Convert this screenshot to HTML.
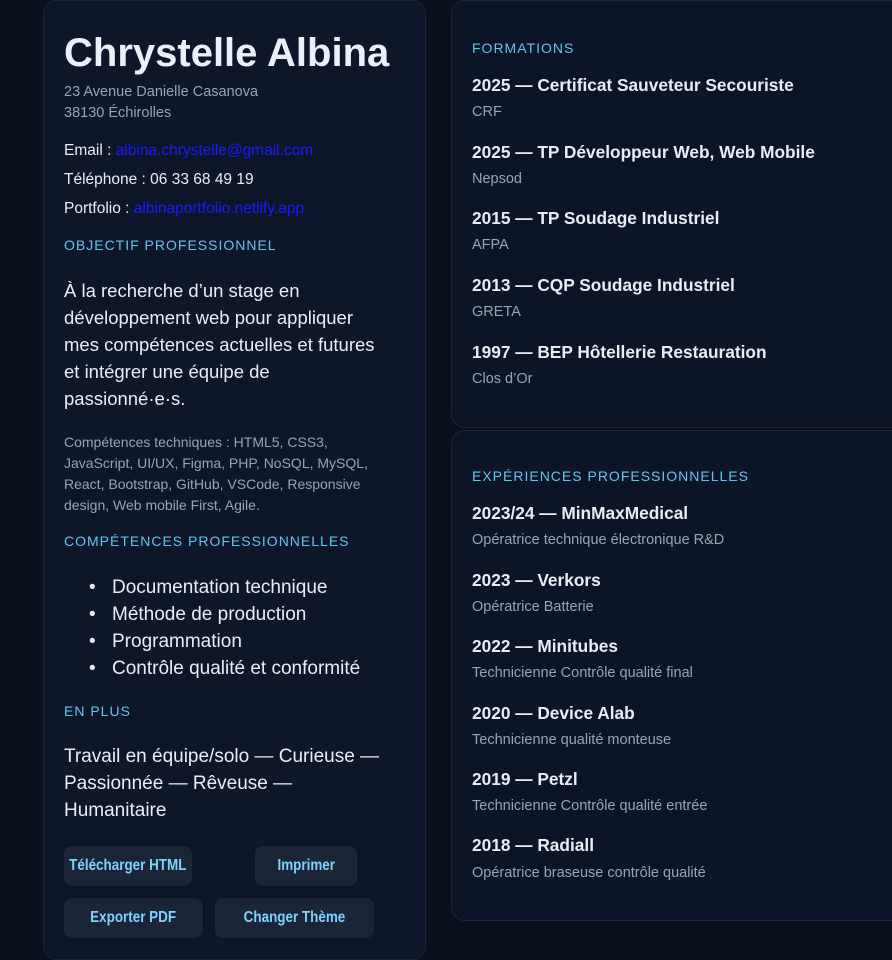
<!DOCTYPE html>
<html><head><meta charset="utf-8"><style>
*{margin:0;padding:0;box-sizing:border-box}
body{width:892px;height:948px;overflow:hidden;background:#0a101d;font-family:"Liberation Sans",sans-serif;color:#e8eef6;position:relative}
.card{position:absolute;background:#0c1527;border:1px solid #1c2638;border-radius:14px}
.t{position:absolute;white-space:nowrap}
.h{font-size:14px;letter-spacing:1px;color:#5fc6f3;height:20px;line-height:20px}
.g{color:#98a3b3}
a{color:#1a1aff}
.b{position:absolute;background:#1b2538;border-radius:8px;color:#7dd3fc;font-weight:bold;font-size:16px;line-height:40px;height:40px;white-space:nowrap;display:flex;justify-content:center}
.b span{display:inline-block;transform:scaleX(0.84);flex:none}
.ti{font-weight:bold;font-size:17.3px;height:24px;line-height:24px}
.su{font-size:14.5px;color:#98a3b3;height:20px;line-height:20px}
</style></head><body>
<div class="card" style="left:43px;top:0;width:383px;height:960px;background:#0e1729"></div>
<div class="card" style="left:451px;top:0;width:460px;height:428px"></div>
<div class="card" style="left:451px;top:430px;width:460px;height:491px"></div>

<div class="t" style="left:64px;top:29px;font-size:40px;font-weight:bold;line-height:48px;color:#eaf1fa">Chrystelle Albina</div>
<div class="t g" style="left:64px;top:82px;font-size:14.5px;line-height:21px">23 Avenue Danielle Casanova<br>38130 Échirolles</div>
<div class="t" style="left:64px;top:141px;font-size:15.5px;line-height:20px">Email : <a>albina.chrystelle@gmail.com</a></div>
<div class="t" style="left:64px;top:170px;font-size:15.5px;line-height:20px">Téléphone : 06 33 68 49 19</div>
<div class="t" style="left:64px;top:199px;font-size:15.5px;line-height:20px">Portfolio : <a>albinaportfolio.netlify.app</a></div>
<div class="t h" style="left:64px;top:235px">OBJECTIF PROFESSIONNEL</div>
<div class="t" style="left:64px;top:277px;font-size:18.5px;line-height:27px">À la recherche d’un stage en<br>développement web pour appliquer<br>mes compétences actuelles et futures<br>et intégrer une équipe de<br>passionné·e·s.</div>
<div class="t g" style="left:64px;top:432px;font-size:14px;line-height:21px">Compétences techniques : HTML5, CSS3,<br>JavaScript, UI/UX, Figma, PHP, NoSQL, MySQL,<br>React, Bootstrap, GitHub, VSCode, Responsive<br>design, Web mobile First, Agile.</div>
<div class="t h" style="left:64px;top:531px">COMPÉTENCES PROFESSIONNELLES</div>
<div class="t" style="left:89px;top:574px;font-size:19px;line-height:27px">•</div>
<div class="t" style="left:89px;top:601px;font-size:19px;line-height:27px">•</div>
<div class="t" style="left:89px;top:628px;font-size:19px;line-height:27px">•</div>
<div class="t" style="left:89px;top:655px;font-size:19px;line-height:27px">•</div>
<div class="t" style="left:112px;top:574px;font-size:19px;line-height:27px">Documentation technique<br>Méthode de production<br>Programmation<br>Contrôle qualité et conformité</div>
<div class="t h" style="left:64px;top:701px">EN PLUS</div>
<div class="t" style="left:64px;top:743px;font-size:19px;line-height:27px">Travail en équipe/solo — Curieuse —<br>Passionnée — Rêveuse —<br>Humanitaire</div>
<div class="b" style="left:64px;top:846px;width:128px"><span>Télécharger HTML</span></div>
<div class="b" style="left:255px;top:846px;width:102px"><span>Imprimer</span></div>
<div class="b" style="left:64px;top:898px;width:139px"><span>Exporter PDF</span></div>
<div class="b" style="left:215px;top:898px;width:159px"><span>Changer Thème</span></div>

<div class="t h" style="left:472px;top:38px">FORMATIONS</div>
<div class="t ti" style="left:472px;top:73px">2025 — Certificat Sauveteur Secouriste</div><div class="t su" style="left:472px;top:102px">CRF</div>
<div class="t ti" style="left:472px;top:140px">2025 — TP Développeur Web, Web Mobile</div><div class="t su" style="left:472px;top:169px">Nepsod</div>
<div class="t ti" style="left:472px;top:206px">2015 — TP Soudage Industriel</div><div class="t su" style="left:472px;top:235px">AFPA</div>
<div class="t ti" style="left:472px;top:273px">2013 — CQP Soudage Industriel</div><div class="t su" style="left:472px;top:302px">GRETA</div>
<div class="t ti" style="left:472px;top:340px">1997 — BEP Hôtellerie Restauration</div><div class="t su" style="left:472px;top:369px">Clos d’Or</div>

<div class="t h" style="left:472px;top:466px">EXPÉRIENCES PROFESSIONNELLES</div>
<div class="t ti" style="left:472px;top:501px">2023/24 — MinMaxMedical</div><div class="t su" style="left:472px;top:530px">Opératrice technique électronique R&amp;D</div>
<div class="t ti" style="left:472px;top:568px">2023 — Verkors</div><div class="t su" style="left:472px;top:597px">Opératrice Batterie</div>
<div class="t ti" style="left:472px;top:634px">2022 — Minitubes</div><div class="t su" style="left:472px;top:663px">Technicienne Contrôle qualité final</div>
<div class="t ti" style="left:472px;top:701px">2020 — Device Alab</div><div class="t su" style="left:472px;top:730px">Technicienne qualité monteuse</div>
<div class="t ti" style="left:472px;top:767px">2019 — Petzl</div><div class="t su" style="left:472px;top:796px">Technicienne Contrôle qualité entrée</div>
<div class="t ti" style="left:472px;top:833px">2018 — Radiall</div><div class="t su" style="left:472px;top:863px">Opératrice braseuse contrôle qualité</div>
</body></html>
